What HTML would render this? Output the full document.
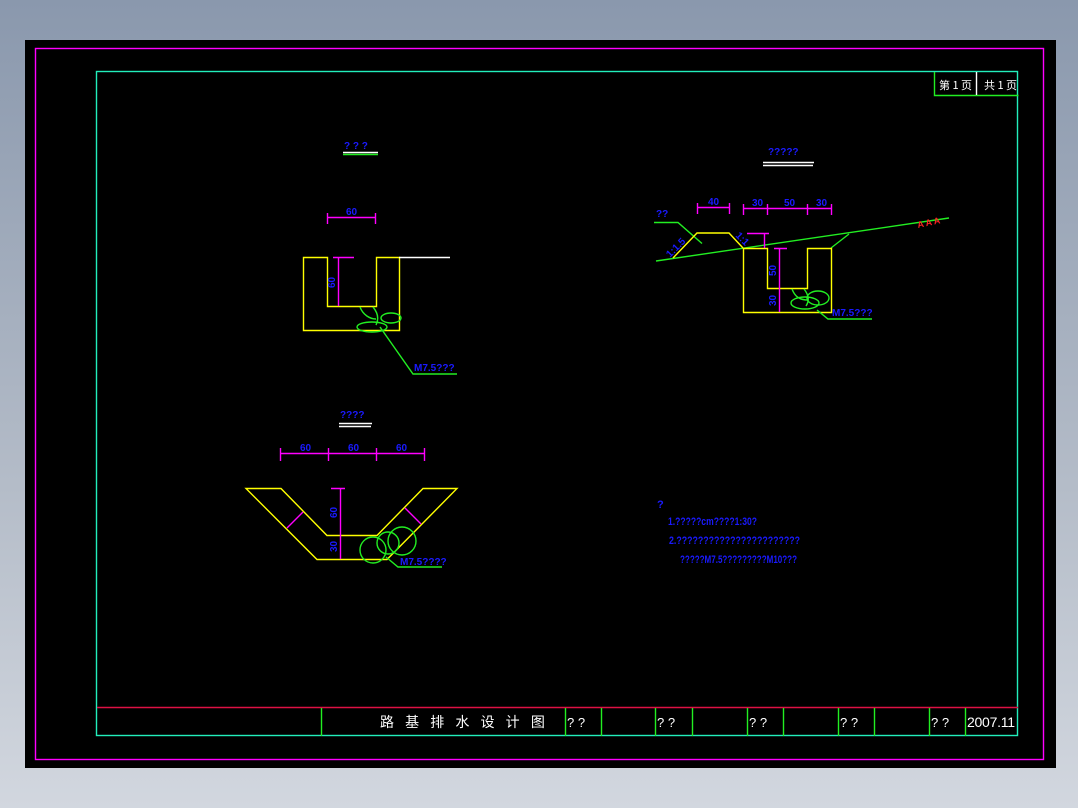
<!DOCTYPE html>
<html><head><meta charset="utf-8"><style>
html,body{margin:0;padding:0;width:1078px;height:808px;overflow:hidden;background:linear-gradient(#8a98ad,#b4bcc8 60%,#d2d7df);}
svg{position:absolute;left:0;top:0}
text{font-family:"Liberation Sans Narrow","Liberation Sans",sans-serif;}
.b{fill:#1a1aff;font-size:10px;font-weight:bold}
.w{fill:#fff}
</style></head><body>
<svg width="1078" height="808" viewBox="0 0 1078 808" fill="none" stroke-width="1.4">
<rect x="25" y="40" width="1031" height="728" fill="#000" stroke="none"/>
<rect x="35.5" y="48.5" width="1008" height="711" stroke="#ff00ff"/>
<rect x="96.5" y="71.5" width="921" height="664" stroke="#22eebb"/>
<!-- top right box -->
<path d="M934.5 72v23.5h84" stroke="#22ee22"/>
<path d="M976.5 72v23" stroke="#fff"/>
<text x="939" y="89" class="w" style="font-size:11px;font-family:'Noto Sans CJK SC',sans-serif">第 1 页</text>
<text x="984" y="89" class="w" style="font-size:11px;font-family:'Noto Sans CJK SC',sans-serif">共 1 页</text>
<!-- title bar -->
<path d="M97 707.5h921" stroke="#dd1144"/>
<path d="M321.5 708v28M565.5 708v28M601.5 708v28M655.5 708v28M692.5 708v28M747.5 708v28M783.5 708v28M838.5 708v28M874.5 708v28M929.5 708v28M965.5 708v28" stroke="#22ee22"/>
<text x="380" y="727" class="w" style="font-size:14px;font-family:'Noto Sans CJK SC',sans-serif;letter-spacing:4px">路 基 排 水 设 计 图</text>
<g class="w" style="font-size:13px"><text x="567" y="727">? ?</text><text x="657" y="727">? ?</text><text x="749" y="727">? ?</text><text x="840" y="727">? ?</text><text x="931" y="727">? ?</text></g>
<text x="967" y="727" class="w" style="font-size:14px" textLength="48">2007.11</text>

<!-- Section 1 -->
<text x="344" y="149" class="b">?  ? ?</text>
<path d="M343 152.5h35" stroke="#fff"/><path d="M343 154.5h35" stroke="#22ee22"/>
<path d="M327.5 213v11M375.5 213v11M327 217.5h48" stroke="#ff00ff"/>
<text x="346" y="215" class="b">60</text>
<path d="M303.5 257.5h24v49h49v-49h23v73h-96z" stroke="#ffff00"/>
<path d="M399 257.5h51" stroke="#fff"/>
<path d="M333 257.5h21M338.5 257v49" stroke="#ff00ff"/>
<text x="0" y="0" class="b" transform="translate(335,288) rotate(-90)">60</text>
<g stroke="#22ee22"><ellipse cx="372" cy="327" rx="15" ry="5"/><ellipse cx="391" cy="318" rx="10" ry="5"/><path d="M360 307c3 8 10 12 16 12M373 307c5 6 6 12 3 18M380 327l33 47h44"/></g>
<text x="414" y="371" class="b">M7.5???</text>

<!-- Section 2 -->
<text x="768" y="155" class="b">?????</text>
<path d="M763 162.5h51M763 165.5h50" stroke="#fff"/>
<path d="M697.5 203v11M729.5 203v11M697 207.5h32M743.5 204v11M767.5 204v11M807.5 204v11M831.5 204v11M743 208.5h88" stroke="#ff00ff"/>
<g class="b"><text x="708" y="205">40</text><text x="752" y="206">30</text><text x="784" y="206">50</text><text x="816" y="206">30</text></g>
<path d="M656 261L949 218" stroke="#22ee22"/>
<path d="M654 222.5h24l24 21M831 248l18-14" stroke="#22ee22"/>
<path d="M673 258l24-25h32l14 15" stroke="#ffff00"/>
<text x="656" y="217" class="b">??</text>
<text x="0" y="0" class="b" transform="translate(670,258) rotate(-45)">1:1.5</text>
<text x="0" y="0" class="b" transform="translate(735,236) rotate(45)">1:1</text>
<path d="M743.5 248.5h24v40h40v-40h24v64h-88z" stroke="#ffff00"/>
<path d="M774 248.5h13M779.5 248v64M747 233.5h22M764.5 233v15" stroke="#ff00ff"/>
<text x="0" y="0" class="b" transform="translate(776,276) rotate(-90)">50</text>
<text x="0" y="0" class="b" transform="translate(776,306) rotate(-90)">30</text>
<g stroke="#22ee22"><ellipse cx="805" cy="303" rx="14" ry="6"/><ellipse cx="818" cy="298" rx="11" ry="7"/><path d="M792 289c3 8 8 11 16 11M804 289c4 5 6 11 2 17M817 310l11 9h44"/></g>
<text x="832" y="316" class="b">M7.5???</text>
<text x="0" y="0" transform="translate(918,228) rotate(-12)" style="fill:#ff2222;font-size:9px;font-weight:bold">A A A</text>

<!-- Section 3 -->
<text x="340" y="418" class="b">????</text>
<path d="M339 423.5h33M339 426.5h32" stroke="#fff"/>
<path d="M280.5 448v13M328.5 448v13M376.5 448v13M424.5 448v13M280 453.5h144" stroke="#ff00ff"/>
<g class="b"><text x="300" y="451">60</text><text x="348" y="451">60</text><text x="396" y="451">60</text></g>
<path d="M246 488.5h35l46 47h50l46-47h34l-70 71h-70z" stroke="#ffff00"/>
<path d="M331 488.5h14M340.5 488v71" stroke="#ff00ff"/>
<text x="0" y="0" class="b" transform="translate(337,518) rotate(-90)">60</text>
<text x="0" y="0" class="b" transform="translate(337,552) rotate(-90)">30</text>
<path d="M287 528l16-16M405 508l16 16" stroke="#ff00ff"/>
<g stroke="#22ee22"><circle cx="373" cy="550" r="13"/><circle cx="388" cy="543" r="11"/><circle cx="402" cy="541" r="14"/><path d="M386 557l12 10h44"/></g>
<text x="400" y="565" class="b">M7.5????</text>

<!-- notes -->
<g class="b" style="font-size:11px">
<text x="657" y="508">?</text>
<text x="668" y="525" textLength="89" lengthAdjust="spacingAndGlyphs">1.?????cm????1:30?</text>
<text x="669" y="544" textLength="131" lengthAdjust="spacingAndGlyphs">2.???????????????????????</text>
<text x="680" y="563" textLength="117" lengthAdjust="spacingAndGlyphs">?????M7.5?????????M10???</text>
</g>
</svg>
</body></html>
